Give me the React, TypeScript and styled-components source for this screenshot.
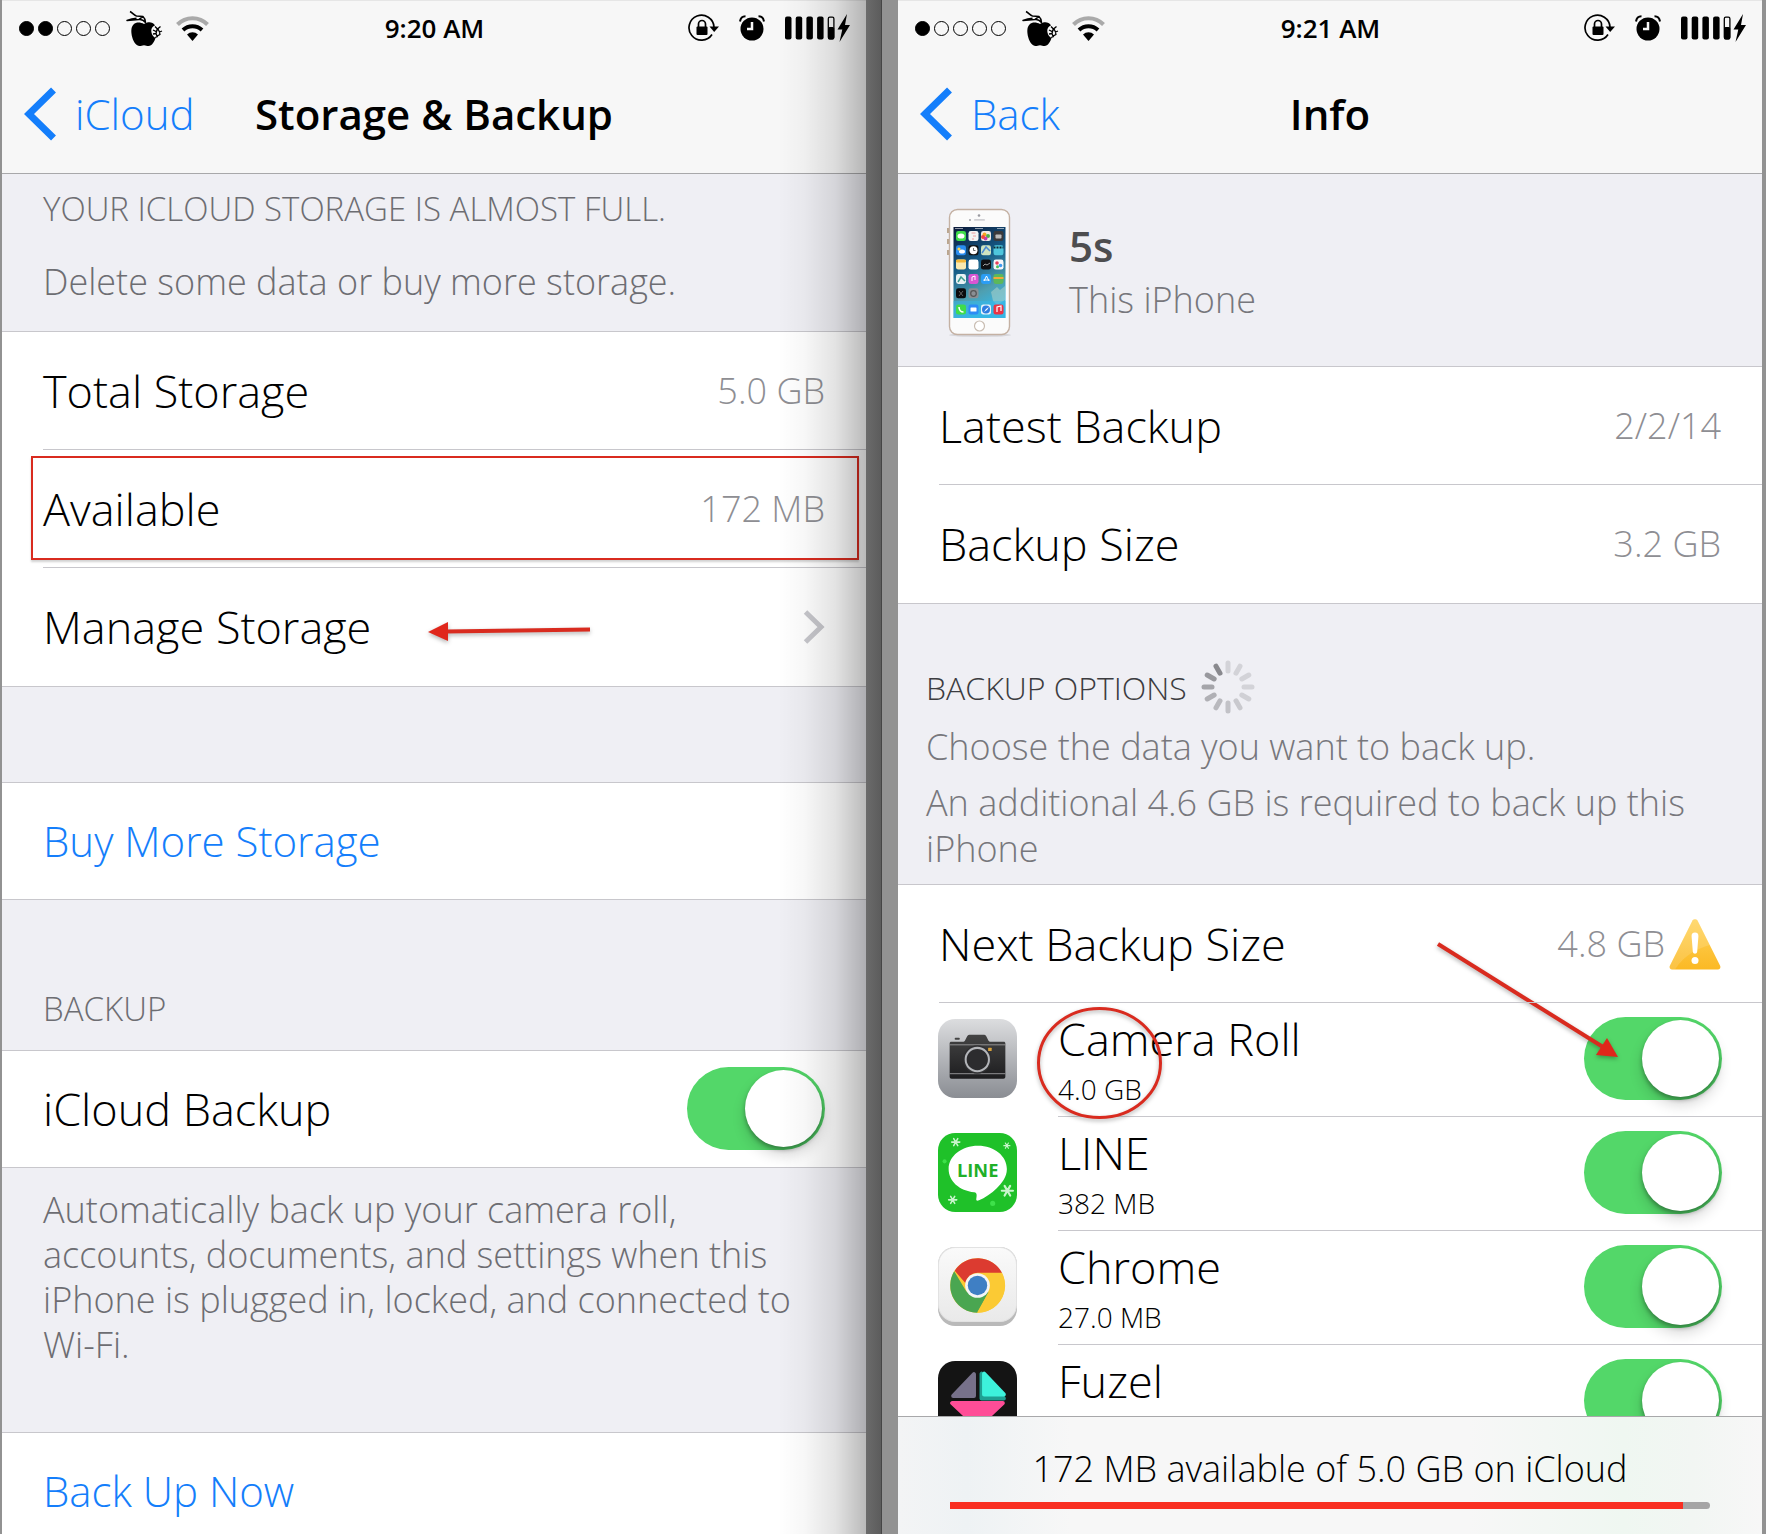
import React, { useState } from "react";
import styled, { createGlobalStyle, css } from "styled-components";

const colors = {
  ink: "#000000",
  blue: "#147efb",
  grayText: "#8e8e93",
  caption: "#6d6d72",
  line: "#c8c7cc",
  section: "#efeff4",
  bar: "#f7f7f7",
  green: "#53d769",
  red: "#d92b1f",
};

const GlobalStyle = createGlobalStyle`
  *, *::before, *::after { box-sizing: border-box; }
  html, body, #root { height: 100%; margin: 0; }
  body { overflow: hidden; background: #929292; }
  body, button, input {
    font-family: "Open Sans", "Noto Sans", sans-serif;
    font-weight: 300;
  }
  h1, h2, p, ul { margin: 0; padding: 0; font-weight: inherit; }
  ul { list-style: none; }
`;

/* ---------- frame ---------- */

const Page = styled.main`
  display: flex;
  height: 100vh;
  padding: 0 4px 0 2px;
  background: #929292;
`;

const Screen = styled.section<{ $shaded?: boolean }>`
  position: relative;
  flex: 1;
  min-width: 0;
  display: flex;
  flex-direction: column;
  overflow: hidden;
  background: ${colors.section};
  ${(p) =>
    p.$shaded &&
    css`
      &::after {
        content: "";
        position: absolute;
        inset: 0 0 0 auto;
        width: 88px;
        pointer-events: none;
        background: linear-gradient(
          to right,
          rgba(0, 0, 0, 0) 0%,
          rgba(0, 0, 0, 0.03) 30%,
          rgba(0, 0, 0, 0.11) 65%,
          rgba(0, 0, 0, 0.27) 100%
        );
      }
    `}
`;

const Gutter = styled.div`
  flex: none;
  width: 32px;
  background: linear-gradient(to right, #6b6b6b 0, #5c5c5c 15px, #454545 15px, #454545 16px, #929292 16px);
`;

const Header = styled.header`
  flex: none;
  background: ${colors.bar};
  border-top: 1px solid #e6e6e6;
  border-bottom: 1px solid #a8a8aa;
`;

const Bar = styled.div`
  display: grid;
  grid-template-columns: 1fr auto 1fr;
  align-items: center;
`;

const StatusBar = styled(Bar)`
  height: 54px;
  padding: 0 16px 0 17px;
`;

const StatusGroup = styled.div<{ $end?: boolean; $gap: number }>`
  display: flex;
  align-items: center;
  justify-content: ${(p) => (p.$end ? "flex-end" : "flex-start")};
  gap: ${(p) => p.$gap}px;
`;

const Dots = styled.div`
  display: flex;
  gap: 4px;
`;

const Dot = styled.span<{ $on: boolean }>`
  width: 15px;
  height: 15px;
  border: 1px solid #000;
  border-radius: 50%;
  background: ${(p) => (p.$on ? "#000" : "transparent")};
`;

const Time = styled.time`
  font-size: 26px;
  line-height: 32px;
  font-weight: 600;
`;

const NavBar = styled(Bar)`
  height: 118px;
  padding: 0 22px;
`;

const BackLink = styled.a`
  display: flex;
  align-items: center;
  gap: 18px;
  color: ${colors.blue};
  font-size: 42px;
  line-height: 56px;
  text-decoration: none;
`;

const Title = styled.h1`
  font-size: 42px;
  line-height: 56px;
  font-weight: 600;
`;

const Scroll = styled.div`
  flex: 1;
  min-height: 0;
  overflow: hidden;
`;

/* ---------- list parts ---------- */

const Note = styled.div<{ $pad: string; $gap?: number }>`
  display: flex;
  flex-direction: column;
  gap: ${(p) => p.$gap ?? 0}px;
  padding: ${(p) => p.$pad};
`;

const Caption = styled.h2<{ $dark?: boolean }>`
  color: ${(p) => (p.$dark ? "#3c3c40" : colors.caption)};
  font-size: ${(p) => (p.$dark ? 32 : 33)}px;
  line-height: 45px;
`;

const Text = styled.p<{ $light?: boolean }>`
  color: ${(p) => (p.$light ? "#77777c" : colors.caption)};
  font-size: 36px;
  line-height: ${(p) => (p.$light ? 46 : 45)}px;
`;

const Inline = styled.div`
  display: flex;
  align-items: center;
  gap: 14px;
  height: 54px;
`;

const Spacer = styled.div`
  height: 95px;
`;

const Group = styled.ul`
  background: #fff;
  border-top: 1px solid ${colors.line};
  border-bottom: 1px solid ${colors.line};
`;

const Row = styled.li`
  position: relative;
  padding-left: 41px;
`;

const rowInner = css`
  display: flex;
  align-items: center;
  justify-content: space-between;
  width: 100%;
  height: 118px;
  padding: 0 41px 0 0;
  border: 0;
  border-bottom: 1px solid ${colors.line};
  background: none;
  color: ${colors.ink};
  font-size: 45px;
  line-height: 60px;
  text-align: left;
  text-decoration: none;

  ${Row}:last-child > & {
    border-bottom-color: transparent;
  }
  ${Row}:only-child > & {
    height: 116px;
  }
`;

const RowBody = styled.div`
  ${rowInner}
`;

const RowLink = styled.a`
  ${rowInner}
`;

const RowButton = styled.button`
  ${rowInner}
  color: ${colors.blue};
  font-size: 42px;
`;

const Value = styled.span`
  display: flex;
  align-items: center;
  gap: 4px;
  color: ${colors.grayText};
  font-size: 36px;
`;

const Toggle = styled.input`
  appearance: none;
  flex: none;
  width: 138px;
  height: 83px;
  margin: 0;
  border-radius: 42px;
  background: #e5e5ea;
  cursor: pointer;

  &::before {
    content: "";
    display: block;
    width: 77px;
    height: 77px;
    margin: 3px;
    border-radius: 50%;
    background: #fff;
    box-shadow: 0 3px 4px rgba(0, 0, 0, 0.3), 0 8px 14px rgba(0, 0, 0, 0.16);
  }
  &:checked {
    background: ${colors.green};
  }
  &:checked::before {
    margin-left: 58px;
  }
`;

/* ---------- right screen ---------- */

const Device = styled.div`
  display: flex;
  align-items: center;
  gap: 58px;
  height: 192px;
  padding: 5px 0 0 49px;
`;

const DeviceName = styled.h2`
  color: #4d4d4f;
  font-size: 42px;
  line-height: 54px;
  font-weight: 600;
`;

const DeviceText = styled.p`
  color: #77777c;
  font-size: 36px;
  line-height: 54px;
`;

const AppRow = styled.li`
  display: flex;
  align-items: center;
  gap: 41px;
  padding-left: 40px;
`;

const AppIcon = styled.svg`
  flex: none;
  width: 79px;
  height: 79px;
  margin-bottom: 4px;
`;

const AppBody = styled.div`
  flex: 1;
  display: flex;
  align-items: center;
  justify-content: space-between;
  height: 114px;
  padding: 0 40px 2px 0;
  border-bottom: 1px solid ${colors.line};
`;

const AppLabel = styled.label`
  display: flex;
  flex-direction: column;
  gap: 8px;
`;

const AppName = styled.span`
  font-size: 45px;
  line-height: 52px;
`;

const AppSize = styled.span`
  font-size: 28px;
  line-height: 32px;
`;

const Footer = styled.footer`
  flex: none;
  display: flex;
  flex-direction: column;
  gap: 10px;
  padding: 29px 52px 25px;
  border-top: 1px solid #a8a8aa;
  background: linear-gradient(
    to right,
    #f3f4f5 0%,
    #eef2f4 8%,
    #f7f7f7 20%,
    #f7f7f7 66%,
    #eff7f1 84%,
    #f2f6f3 92%,
    #f7f7f7 100%
  );
`;

const FooterText = styled.label`
  font-size: 36px;
  line-height: 46px;
  text-align: center;
`;

const Meter = styled.progress`
  appearance: none;
  display: block;
  width: 100%;
  height: 7px;
  border: 0;

  &::-webkit-progress-bar {
    background: #a5a5a5;
    border-radius: 0 4px 4px 0;
  }
  &::-webkit-progress-value {
    background: #f92f22;
  }
`;

/* ---------- hand-drawn marks over the screens ---------- */

const MarkBox = styled.span`
  position: absolute;
  inset: 6px 7px 8px 29px;
  border: 2px solid ${colors.red};
  box-shadow: 0 2px 2px rgba(0, 0, 0, 0.18);
  pointer-events: none;
`;

const Mark = styled.svg`
  position: absolute;
  overflow: visible;
  pointer-events: none;
  filter: drop-shadow(0 2px 2px rgba(0, 0, 0, 0.3));
`;

const ArrowLeft = styled(Mark)`
  left: 426px;
  top: 51px;
`;

const MarkAnchor = styled.div`
  position: relative;
  height: 0;
`;

const ArrowDown = styled(Mark)`
  right: 143px;
  top: 58px;
`;

const Ring = styled(Mark)`
  left: 139px;
  top: 123px;
`;

/* ---------- drawings ---------- */

const AppleIcon = () => (
  <svg width="37" height="37" viewBox="0 0 37 37" aria-hidden="true">
    <path
      d="M18 14c2.500-1.700 6-2.200 8.500-1 1 .5 2 1.200 2.500 2.500-3.500 1.500-4 4-3.500 7 .4 2.500 2 4.500 4 5.500-1 3.500-3.500 8-7 8-1.800 0-2.600-.8-4.500-.8s-2.700.8-4.500.8c-3 0-6-4-7.200-8.500C5 22.500 4.700 17.500 7.500 14.500c2.800-2.800 7-2.300 10.500-.5z"
      fill="#000"
    />
    <path
      d="M29 16.500l2.500 2.500 3-2.500M27 20l3 1.500 2-2.500 1.500 3 2.500-1M27 24l3-.5 1 2.500 3-1.500M31 19.500l-1 4M33.500 22l.5 3M29 27.500l3-1"
      fill="none"
      stroke="#000"
      strokeWidth="1.300"
    />
    <path
      d="M4 1.500c3 1.500 4 4 6.500 4.500L17 6.500c1.800 1.500 2.300 3.500 2.500 6-2-2.500-3.500-3.500-6.500-3L1 10.500c3-1.200 6-2 9.500-2.300M13 9.300l4-2.600"
      fill="none"
      stroke="#000"
      strokeWidth="1.500"
      strokeLinejoin="round"
    />
  </svg>
);

const WifiIcon = () => (
  <svg width="33" height="25" viewBox="0 0 33 25" aria-hidden="true">
    <path d="M1.500 8.500a21 21 0 0 1 30 0" fill="none" stroke="#aaa" strokeWidth="4" />
    <path d="M7 14a14 14 0 0 1 19 0" fill="none" stroke="#000" strokeWidth="4" />
    <path d="M16.500 25l-5.500-6.500a8 8 0 0 1 11 0z" fill="#000" />
  </svg>
);

const RotationLockIcon = () => (
  <svg width="31" height="28" viewBox="0 0 31 28" aria-hidden="true">
    <path d="M24 20.500A12.500 12.500 0 1 1 26 13" fill="none" stroke="#000" strokeWidth="1.700" />
    <path d="M21.500 12.500h9.500l-4.800 5.500z" fill="#000" />
    <rect x="8.500" y="12.500" width="11" height="8.500" rx="1" fill="#000" />
    <path d="M10.500 13v-3a3.500 3.500 0 0 1 7 0v3" fill="none" stroke="#000" strokeWidth="1.700" />
  </svg>
);

const AlarmIcon = () => (
  <svg width="26" height="26" viewBox="0 0 26 26" aria-hidden="true">
    <circle cx="13" cy="14" r="11.500" fill="#000" />
    <path d="M13 7v7H8" fill="none" stroke="#f7f7f7" strokeWidth="2.500" />
    <path d="M1 6.500C1.500 3 4 1.200 6.500 1.200M25 6.500c-.5-3.500-3-5.300-5.500-5.300" fill="none" stroke="#000" strokeWidth="2" />
  </svg>
);

const BatteryIcon = () => (
  <svg width="65" height="28" viewBox="0 0 65 28" aria-hidden="true">
    {[0, 10.7, 21.4, 32.1].map((x) => (
      <rect key={x} x={x} y="2.500" width="6.500" height="23" rx="2" fill="#000" />
    ))}
    <rect x="43.300" y="3.200" width="5.600" height="21.600" rx="1.500" fill="none" stroke="#000" strokeWidth="1.300" />
    <rect x="43" y="13" width="6.200" height="12.500" rx="1.500" fill="#000" />
    <path d="M62 0L52.500 15.500h4.800L54.500 28 65 11h-5z" fill="#000" />
  </svg>
);

const BackChevron = () => (
  <svg width="33" height="54" viewBox="0 0 33 54" aria-hidden="true">
    <path d="M29.500 3L5 27l24.500 24" fill="none" stroke={colors.blue} strokeWidth="7" />
  </svg>
);

const RowChevron = () => (
  <svg width="22" height="34" viewBox="0 0 22 34" aria-hidden="true">
    <path d="M2.500 2L18 17 2.500 32" fill="none" stroke="#c7c7cc" strokeWidth="5" />
  </svg>
);

const spinnerShades = [
  "#d3d3d8", "#d3d3d8", "#d3d3d8", "#d3d3d8", "#d0d0d5", "#c9c9ce",
  "#c2c2c7", "#b9b9be", "#b0b0b5", "#a5a5aa", "#98989d", "#89898e",
];

const Spinner = () => (
  <svg width="54" height="54" viewBox="-27 -27 54 54" role="img" aria-label="Loading">
    {spinnerShades.map((shade, i) => (
      <rect key={i} x="-2.500" y="-26.500" width="5" height="13" rx="2.500" fill={shade} transform={`rotate(${i * 30})`} />
    ))}
  </svg>
);

const WarningIcon = () => (
  <svg width="52" height="52" viewBox="0 0 52 52" role="img" aria-label="Warning">
    <defs>
      <linearGradient id="warn" x1="0" y1="0" x2="0" y2="1">
        <stop offset="0" stopColor="#ffd35a" />
        <stop offset="1" stopColor="#fbb924" />
      </linearGradient>
    </defs>
    <path d="M23.500 2.500a3 3 0 0 1 5 0l22.500 45c1 2 0 4-2 4H3c-2 0-3-2-2-4z" fill="url(#warn)" />
    <path d="M23.500 2.500a3 3 0 0 1 5 0L41 27C30 30 16 36 6 51.500H3c-2 0-3-2-2-4z" fill="#fff" opacity="0.14" />
    <path d="M26 14.500c2.500 0 3.600 1.500 3.400 4l-1.200 15c-.3 3-4.100 3-4.400 0l-1.200-15c-.2-2.500.9-4 3.400-4z" fill="#fff" />
    <circle cx="26" cy="42.500" r="3.500" fill="#fff" />
  </svg>
);

const homeApps = [
  ["#3fdc4b", "#f4f4f4", "#f0e9e4", "#3a3a3c"],
  ["#2a8df0", "#111111", "#cfe3c0", "#4fc6dc"],
  ["#f8e9b0", "#ffffff", "#101012", "#f6f6f8"],
  ["#e9f2f4", "#d955d3", "#2a9df4", "#5cb85a"],
  ["#0b0b0d", "#8b8f94"],
];
const dockApps = ["#3fdc4b", "#2d8cf5", "#e8f1fa", "#ea3345"];

const PhoneDrawing = () => (
  <svg width="64" height="130" viewBox="0 0 64 130" role="img" aria-label="iPhone">
    <defs>
      <linearGradient id="wall" x1="0" y1="0" x2="0.300" y2="1">
        <stop offset="0" stopColor="#0b1838" />
        <stop offset="0.450" stopColor="#155a86" />
        <stop offset="0.800" stopColor="#4f9fb0" />
        <stop offset="1" stopColor="#38b4e0" />
      </linearGradient>
    </defs>
    <ellipse cx="33" cy="127" rx="31" ry="2" fill="#000" opacity="0.100" />
    <path d="M1 20v5M1 31v5M1 42v5" stroke="#b9a58f" strokeWidth="2" />
    <rect x="2.500" y="1.500" width="60" height="125" rx="8" fill="#fbfbfb" stroke="#c4b1a3" strokeWidth="1.400" />
    <circle cx="32" cy="7.500" r="1.300" fill="#9a9aa0" />
    <rect x="27" y="11" width="11" height="1.800" rx="0.900" fill="#d0d0d4" />
    <circle cx="23" cy="12" r="1" fill="#a0a0a6" />
    <rect x="6.500" y="19" width="52" height="91" fill="url(#wall)" />
    <path d="M8 20.500h8M28 20.500h8M50 20.500h7" stroke="#fff" strokeWidth="0.800" opacity="0.700" />
    <path d="M44 84l6-5 3 3 5-4v14l-8 5-4-4z" fill="#a8cfc6" opacity="0.600" />
    <rect x="6.500" y="93" width="52" height="17" fill="#35b8ea" opacity="0.500" />
    {homeApps.map((line, r) =>
      line.map((fill, c) => (
        <rect key={`${r}-${c}`} x={9 + c * 12.5} y={23 + r * 14.3} width="10" height="10" rx="2.300" fill={fill} />
      ))
    )}
    {dockApps.map((fill, c) => (
      <rect key={c} x={9 + c * 12.5} y="96.500" width="10" height="10" rx="2.300" fill={fill} />
    ))}
    <ellipse cx="14" cy="28" rx="3.500" ry="2.600" fill="#fff" />
    <circle cx="37.500" cy="26.500" r="2" fill="#f6a623" />
    <circle cx="41" cy="28" r="2" fill="#4bb04a" />
    <circle cx="38.500" cy="30.500" r="2" fill="#c13bb5" />
    <circle cx="36" cy="29" r="2" fill="#ef4b3e" />
    <path d="M24.500 25h4M26 28h3M25 31h2" stroke="#e88" strokeWidth="0.800" />
    <rect x="48.500" y="26.500" width="6" height="4" rx="0.800" fill="#bbb" />
    <ellipse cx="15" cy="43.500" rx="3" ry="2" fill="#fff" />
    <circle cx="12" cy="41" r="1.600" fill="#ffd54a" />
    <circle cx="26.500" cy="42.300" r="4" fill="#fff" />
    <path d="M26.500 40v2.500h2" stroke="#333" strokeWidth="0.700" fill="none" />
    <path d="M35 45l4-6 4 4" stroke="#4a8ad4" strokeWidth="1.500" fill="none" />
    <path d="M46.500 39.500h10" stroke="#0b2a35" strokeWidth="2" strokeDasharray="2 1" />
    <rect x="9" y="51.600" width="10" height="3" rx="1.300" fill="#f2b73a" />
    <path d="M36 58l2-2 2 1 3-2" stroke="#ddd" strokeWidth="0.700" fill="none" />
    <circle cx="50" cy="55" r="1.800" fill="#e5405e" />
    <circle cx="53.500" cy="57.500" r="1.800" fill="#3d9af0" />
    <circle cx="50.500" cy="58.800" r="1.500" fill="#48c25a" />
    <path d="M11 74l3-5 4 4" stroke="#3c9c8e" strokeWidth="1.500" fill="none" />
    <path d="M25 73v-4l3-1v4" stroke="#fff" strokeWidth="1" fill="none" />
    <path d="M37 73l2.500-5 2.500 5M36.500 72h6" stroke="#fff" strokeWidth="1" fill="none" />
    <path d="M46.500 70h10" stroke="#f4a83a" strokeWidth="2" />
    <path d="M12 83l4 5M16 83l-4 5" stroke="#777" strokeWidth="0.800" />
    <circle cx="26.500" cy="85.500" r="2.800" fill="none" stroke="#555" strokeWidth="1.200" />
    <path d="M12 99c0 3 2 5 4.500 5" stroke="#fff" strokeWidth="1.600" fill="none" />
    <rect x="23.500" y="99.500" width="6" height="4" rx="0.600" fill="#fff" />
    <circle cx="39" cy="101.500" r="4" fill="#2f7de0" />
    <path d="M37 104l2-3 3-2-2 3z" fill="#fff" />
    <path d="M50 104v-5l4-1v5" stroke="#fff" strokeWidth="1.200" fill="none" />
    <circle cx="32.500" cy="118" r="5" fill="#fff" stroke="#c9bdb2" strokeWidth="1.200" />
  </svg>
);

const CameraIcon = () => (
  <AppIcon viewBox="0 0 78 78" aria-hidden="true">
    <defs>
      <linearGradient id="cam" x1="0" y1="0" x2="0" y2="1">
        <stop offset="0" stopColor="#dcdddf" />
        <stop offset="1" stopColor="#8a8d93" />
      </linearGradient>
      <linearGradient id="camBody" x1="0" y1="0" x2="0" y2="1">
        <stop offset="0" stopColor="#444" />
        <stop offset="1" stopColor="#1d1d1f" />
      </linearGradient>
    </defs>
    <rect width="78" height="78" rx="17" fill="url(#cam)" />
    <rect x="16.500" y="18.500" width="5" height="2" rx="0.800" fill="#444" />
    <path
      d="M13 22.500h12c2.500 0 3-7 6-7h14.500c3 0 3.500 7 6 7H65c.8 0 1.500.7 1.500 1.500V57c0 1-.7 2-2 2h-51c-1.300 0-2-1-2-2V24c0-.8.700-1.500 1.500-1.500z"
      fill="url(#camBody)"
    />
    <path d="M11.500 25.500h55M11.500 54h55" stroke="#9a9a9c" strokeWidth="0.900" />
    <circle cx="38.800" cy="40" r="14" fill="#303032" />
    <circle cx="38.800" cy="40" r="11.500" fill="#2c2c2e" stroke="#b4b6ba" strokeWidth="2" />
    <rect x="49.500" y="28.500" width="3.500" height="3" rx="0.500" fill="#d8a13a" />
  </AppIcon>
);

const Flake = ({ x, y, r }: { x: number; y: number; r: number }) => (
  <path
    d={`M${x - r} ${y}h${r * 2}M${x - r / 2} ${y - r * 0.87}l${r} ${r * 1.74}M${x + r / 2} ${y - r * 0.87}l${-r} ${r * 1.74}`}
    stroke="#c9f5cc"
    strokeWidth={r / 2.6}
    strokeLinecap="round"
  />
);

const LineIcon = () => (
  <AppIcon viewBox="0 0 78 78" aria-hidden="true">
    <rect width="78" height="78" rx="17" fill="#1fc129" />
    <Flake x={17.5} y={9} r={4} />
    <Flake x={68} y={12.5} r={3} />
    <Flake x={68.5} y={57} r={5.5} />
    <Flake x={14.5} y={66} r={4} />
    <circle cx="6.500" cy="28" r="2" fill="#3ee04a" />
    <circle cx="54" cy="69.500" r="2.500" fill="#3ee04a" />
    <path
      d="M39.500 12.500C55.500 12.500 68 22.500 68 35.500c0 8-5 14-10 19-5 5-12 9.500-17.500 12-2 1-3 .3-2.700-1.500.5-3 1-6-2-6.500C21 57 10.500 47.500 10.500 35.500c0-13 13-23 29-23z"
      fill="#fff"
    />
    <text
      x="39.200"
      y="43"
      textAnchor="middle"
      fontFamily='"Open Sans", sans-serif'
      fontSize="18"
      fontWeight="700"
      fill="#1fb028"
    >
      LINE
    </text>
  </AppIcon>
);

const ChromeIcon = () => (
  <AppIcon viewBox="0 0 78 78" aria-hidden="true">
    <defs>
      <linearGradient id="chr" x1="0" y1="0" x2="0" y2="1">
        <stop offset="0" stopColor="#fafafa" />
        <stop offset="1" stopColor="#e9e9e9" />
      </linearGradient>
    </defs>
    <rect width="78" height="78" rx="17" fill="#b9b9b9" />
    <rect x="0.500" y="0.500" width="77" height="73" rx="16.500" fill="url(#chr)" stroke="#e2e2e2" />
    <circle cx="39" cy="38" r="27" fill="#fbca34" />
    <path d="M16 24A27 27 0 0 0 39 65l11-20.500L39 38l-11 6z" fill="#4aa651" />
    <path d="M39 25.500h24.200A27 27 0 0 1 38.500 65l11.500-20.500z" fill="#fbca34" />
    <path d="M16.500 23.500A27 27 0 0 1 63.200 25.500H39a12.500 12.500 0 0 0-12 10z" fill="#dc3b30" />
    <circle cx="39" cy="38" r="12.200" fill="#f5f5f5" />
    <circle cx="39" cy="38" r="9.600" fill="#3f7fc4" />
  </AppIcon>
);

const FuzelIcon = () => (
  <AppIcon viewBox="0 0 78 78" aria-hidden="true">
    <rect width="78" height="78" rx="17" fill="#141414" />
    <path d="M43 12.500V37h22z" fill="#1f9f92" stroke="#1f9f92" strokeWidth="4" strokeLinejoin="round" />
    <path d="M35.500 13v21.500H15z" fill="#77718a" stroke="#77718a" strokeWidth="4" strokeLinejoin="round" />
    <path d="M45.500 12.500v20.500H65z" fill="#3df2dc" stroke="#3df2dc" strokeWidth="4" strokeLinejoin="round" />
    <path d="M14 41.500h50L39 65z" fill="#ff4d97" stroke="#ff4d97" strokeWidth="4" strokeLinejoin="round" />
  </AppIcon>
);

/* ---------- composed parts ---------- */

const ScreenHeader = ({ signal, time, back, title }: { signal: number; time: string; back: string; title: string }) => (
  <Header>
    <StatusBar>
      <StatusGroup $gap={16}>
        <Dots role="img" aria-label={`Signal ${signal} of 5`}>
          {[0, 1, 2, 3, 4].map((i) => (
            <Dot key={i} $on={i < signal} />
          ))}
        </Dots>
        <StatusGroup $gap={13}>
          <AppleIcon />
          <WifiIcon />
        </StatusGroup>
      </StatusGroup>
      <Time>{time}</Time>
      <StatusGroup $end $gap={20}>
        <RotationLockIcon />
        <AlarmIcon />
        <BatteryIcon />
      </StatusGroup>
    </StatusBar>
    <NavBar>
      <BackLink href="#back">
        <BackChevron />
        {back}
      </BackLink>
      <Title>{title}</Title>
    </NavBar>
  </Header>
);

const Switch = ({ id }: { id: string }) => {
  const [on, setOn] = useState(true);
  return <Toggle id={id} type="checkbox" role="switch" checked={on} onChange={(e) => setOn(e.target.checked)} />;
};

const apps = [
  { id: "camera-roll", name: "Camera Roll", size: "4.0 GB", Icon: CameraIcon },
  { id: "line", name: "LINE", size: "382 MB", Icon: LineIcon },
  { id: "chrome", name: "Chrome", size: "27.0 MB", Icon: ChromeIcon },
  { id: "fuzel", name: "Fuzel", size: "", Icon: FuzelIcon },
];

const StorageScreen = () => (
  <Screen $shaded>
    <ScreenHeader signal={2} time="9:20 AM" back="iCloud" title="Storage & Backup" />
    <Scroll>
      <Note $pad="12px 41px 27px" $gap={28}>
        <Caption>YOUR ICLOUD STORAGE IS ALMOST FULL.</Caption>
        <Text>Delete some data or buy more storage.</Text>
      </Note>
      <Group>
        <Row>
          <RowBody>
            <span>Total Storage</span>
            <Value>5.0 GB</Value>
          </RowBody>
        </Row>
        <Row>
          <RowBody>
            <span>Available</span>
            <Value>172 MB</Value>
          </RowBody>
          <MarkBox />
        </Row>
        <Row>
          <RowLink href="#manage">
            Manage Storage
            <RowChevron />
          </RowLink>
          <ArrowLeft width="164" height="24" viewBox="0 0 164 24" aria-hidden="true">
            <path d="M18 12.500L162 10.500" stroke={colors.red} strokeWidth="4" />
            <path d="M0 13L20 3v19z" fill="#e0261b" />
          </ArrowLeft>
        </Row>
      </Group>
      <Spacer />
      <Group>
        <Row>
          <RowButton type="button">Buy More Storage</RowButton>
        </Row>
      </Group>
      <Note $pad="86px 41px 19px">
        <Caption>BACKUP</Caption>
      </Note>
      <Group>
        <Row>
          <RowBody>
            <label htmlFor="icloud-backup">iCloud Backup</label>
            <Switch id="icloud-backup" />
          </RowBody>
        </Row>
      </Group>
      <Note $pad="19px 41px 65px">
        <Text>
          Automatically back up your camera roll, accounts, documents, and settings when this iPhone is plugged in,
          locked, and connected to Wi-Fi.
        </Text>
      </Note>
      <Group>
        <Row>
          <RowButton type="button">Back Up Now</RowButton>
        </Row>
      </Group>
    </Scroll>
  </Screen>
);

const InfoScreen = () => (
  <Screen>
    <ScreenHeader signal={1} time="9:21 AM" back="Back" title="Info" />
    <Scroll>
      <Device>
        <PhoneDrawing />
        <div>
          <DeviceName>5s</DeviceName>
          <DeviceText>This iPhone</DeviceText>
        </div>
      </Device>
      <Group>
        <Row>
          <RowBody>
            <span>Latest Backup</span>
            <Value>2/2/14</Value>
          </RowBody>
        </Row>
        <Row>
          <RowBody>
            <span>Backup Size</span>
            <Value>3.2 GB</Value>
          </RowBody>
        </Row>
      </Group>
      <Note $pad="56px 28px 12px" $gap={10}>
        <Inline>
          <Caption $dark>BACKUP OPTIONS</Caption>
          <Spinner />
        </Inline>
        <Text $light>Choose the data you want to back up.</Text>
        <Text $light>An additional 4.6 GB is required to back up this iPhone</Text>
      </Note>
      <MarkAnchor>
        <ArrowDown width="182" height="116" viewBox="0 0 182 116" aria-hidden="true">
          <path d="M1 2L166 105" stroke={colors.red} strokeWidth="4" />
          <path d="M181 115l-11-19-11 17z" fill="#e0261b" />
        </ArrowDown>
        <Ring width="125" height="112" viewBox="0 0 125 112" aria-hidden="true">
          <ellipse cx="62.500" cy="56" rx="61" ry="54.500" fill="none" stroke={colors.red} strokeWidth="3" />
        </Ring>
      </MarkAnchor>
      <Group>
        <Row>
          <RowBody>
            <span>Next Backup Size</span>
            <Value>
              4.8 GB
              <WarningIcon />
            </Value>
          </RowBody>
        </Row>
        {apps.map(({ id, name, size, Icon }) => (
          <AppRow key={id}>
            <Icon />
            <AppBody>
              <AppLabel htmlFor={id}>
                <AppName>{name}</AppName>
                <AppSize>{size || "\u00a0"}</AppSize>
              </AppLabel>
              <Switch id={id} />
            </AppBody>
          </AppRow>
        ))}
      </Group>
    </Scroll>
    <Footer>
      <FooterText htmlFor="storage-used">172 MB available of 5.0 GB on iCloud</FooterText>
      <Meter id="storage-used" max={1000} value={965} />
    </Footer>
  </Screen>
);

export default function App() {
  return (
    <>
      <GlobalStyle />
      <Page>
        <StorageScreen />
        <Gutter />
        <InfoScreen />
      </Page>
    </>
  );
}
